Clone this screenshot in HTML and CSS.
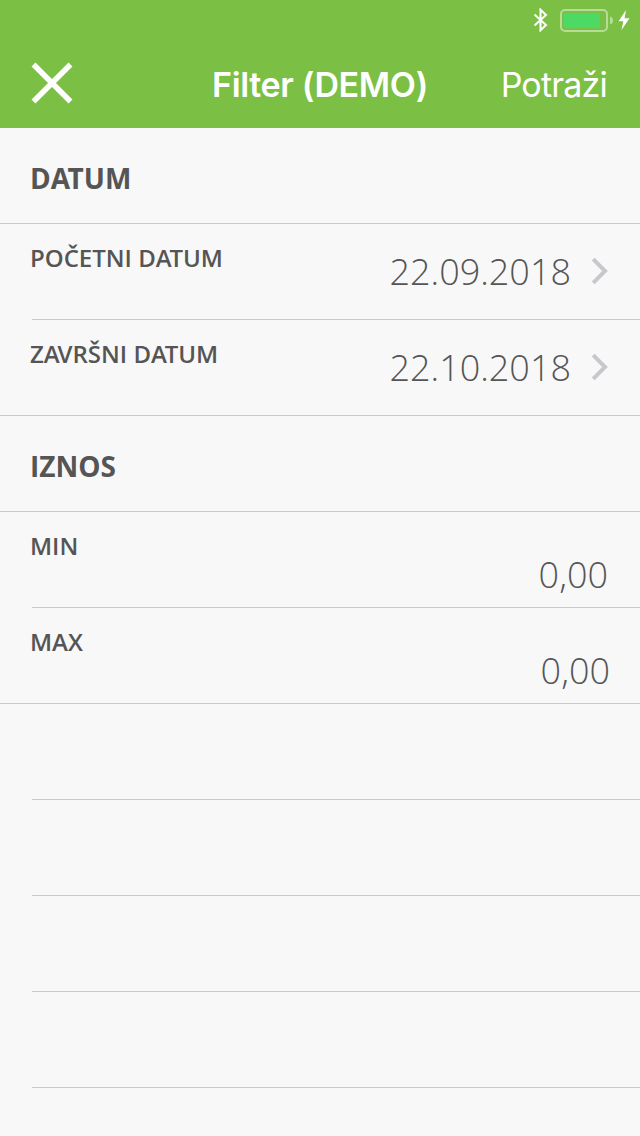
FILE: index.html
```html
<!DOCTYPE html>
<html lang="hr">
<head>
  <meta charset="UTF-8">
  <meta name="viewport" content="width=device-width, initial-scale=1.0">
  <title>Filter</title>
  <link rel="stylesheet" href="styles.css">
</head>
<body>
  <header class="header">
    <div class="status-bar">
      <svg class="bluetooth" width="16" height="24" viewBox="0 0 16 24">
        <path d="M1.5 6.5L13 17L7.5 22.3V1.7L13 7L1.5 17.5" fill="none" stroke="#fff" stroke-width="2"/>
      </svg>
      <svg class="battery" width="54" height="24" viewBox="0 0 54 24">
        <rect x="1" y="2" width="46" height="21" rx="4" fill="none" stroke="#fff" stroke-opacity="0.45" stroke-width="2"/>
        <rect x="4" y="5" width="36" height="15" rx="1" fill="#4cd964"/>
        <path d="M50 8.5C54 9.5 54 15.5 50 16.5Z" fill="#fff" fill-opacity="0.45"/>
      </svg>
      <svg class="bolt" width="12" height="22" viewBox="0 0 12 22">
        <path d="M8 1L0.5 12.3H5.3L3.5 21L11.5 9.2H6.6Z" fill="#fff"/>
      </svg>
    </div>
    <div class="nav">
      <button class="close" aria-label="Zatvori">
        <svg width="42" height="42" viewBox="0 0 42 42">
          <path d="M2.5 2.5L39.5 39.5M39.5 2.5L2.5 39.5" stroke="#fff" stroke-width="5.5"/>
        </svg>
      </button>
      <h1>Filter (DEMO)</h1>
      <button class="search">Potraži</button>
    </div>
  </header>
  <main class="list">
    <h2>D<span class="kern">A</span>TUM</h2>
    <div class="row">
      <span class="label">POČETNI D<span class="kern">A</span>TUM</span>
      <span class="date">22.09.2018</span>
      <svg class="chevron" width="18" height="28" viewBox="0 0 18 28">
        <path d="M2.2 2.2L14 14L2.2 25.8" fill="none" stroke="#c7c7cc" stroke-width="4"/>
      </svg>
    </div>
    <div class="row last">
      <span class="label">Z<span class="kern">A</span>VRŠNI D<span class="kern">A</span>TUM</span>
      <span class="date">22.10.2018</span>
      <svg class="chevron" width="18" height="28" viewBox="0 0 18 28">
        <path d="M2.2 2.2L14 14L2.2 25.8" fill="none" stroke="#c7c7cc" stroke-width="4"/>
      </svg>
    </div>
    <h2>IZNOS</h2>
    <div class="row">
      <span class="label">MIN</span>
      <span class="amount">0,00</span>
    </div>
    <div class="row last">
      <span class="label">MAX</span>
      <span class="amount amount-max">0,00</span>
    </div>
    <div class="row"></div>
    <div class="row"></div>
    <div class="row"></div>
    <div class="row"></div>
  </main>
</body>
</html>
```

FILE: styles.css
```css
* {
  box-sizing: border-box;
}
body {
  margin: 0;
  height: 1136px;
  background-color: #f8f8f8;
  color: #555;
  font-family: "Open Sans", sans-serif;
}
.header {
  height: 128px;
  background-color: #7bbf45;
  color: #fff;
  font-family: Inter, sans-serif;
}
.status-bar {
  display: flex;
  justify-content: flex-end;
  align-items: center;
  height: 40px;
  padding-right: 10px;
}
.battery {
  margin: -1px 4px 0 11px;
}
.nav {
  display: grid;
  grid-template-columns: 180px 1fr 180px;
  align-items: center;
  height: 88px;
}
.nav h1 {
  margin: 0;
  padding-top: 1px;
  font-size: 34px;
  font-weight: 600;
  line-height: 88px;
  letter-spacing: -0.35px;
  text-align: center;
  white-space: nowrap;
}
button {
  padding: 0;
  border: none;
  background: none;
  color: #fff;
  font-family: inherit;
}
.close {
  justify-self: start;
  height: 42px;
  margin: -3px 0 0 31px;
}
.close svg {
  display: block;
}
.search {
  justify-self: end;
  margin-right: 33px;
  padding-top: 1px;
  font-size: 34px;
  line-height: 88px;
  letter-spacing: -0.8px;
}
h2 {
  height: 96px;
  margin: 0;
  padding: 3px 30px 0;
  border-bottom: 1px solid #c8c7cc;
  font-size: 28px;
  font-weight: 700;
  line-height: 95px;
}
.row {
  display: flex;
  align-items: flex-start;
  height: 96px;
  padding-right: 30px;
  padding-left: 30px;
  background: linear-gradient(#c8c7cc, #c8c7cc) 32px 95px / 100% 1px no-repeat;
}
.last {
  background-position: 0 95px;
}
.label {
  flex: 1;
  margin-top: 17px;
  font-size: 24px;
  font-weight: 600;
  line-height: 34px;
}
.kern {
  letter-spacing: -0.09em;
}
.date, .amount {
  font-size: 36px;
  font-weight: 300;
  line-height: 50px;
}
.date {
  margin-top: 23px;
}
.chevron {
  margin: 33px 1px 0 20px;
}
.amount {
  margin-top: 38px;
  margin-right: 2px;
}
.amount-max {
  margin-right: 0;
}
```
